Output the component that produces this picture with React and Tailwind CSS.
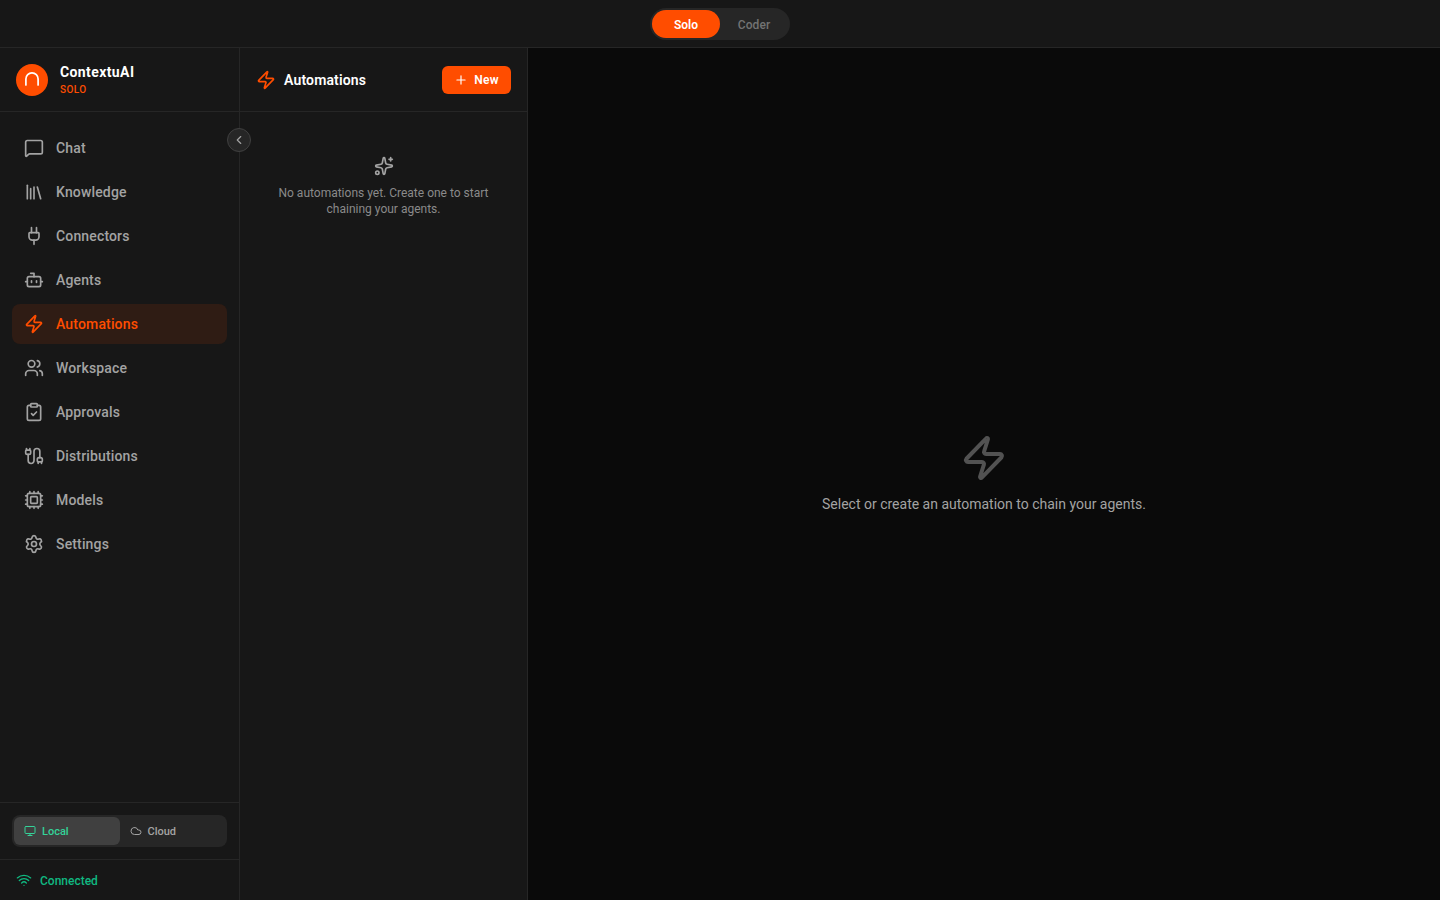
import React from "react";
import { MessageSquare, Library, Plug, Bot, Zap, Users, ClipboardCheck, Cable, Cpu, Settings, Monitor, Cloud, Wifi, Plus, Sparkles, ChevronLeft } from "lucide-react";

const NAV = [
  ["Chat", MessageSquare],
  ["Knowledge", Library],
  ["Connectors", Plug],
  ["Agents", Bot],
  ["Automations", Zap],
  ["Workspace", Users],
  ["Approvals", ClipboardCheck],
  ["Distributions", Cable],
  ["Models", Cpu],
  ["Settings", Settings],
];

export default function App() {
  return (
    <div className="h-screen w-full flex flex-col bg-[#0a0a0a] overflow-hidden font-['Roboto',sans-serif]">
      <header className="h-12 shrink-0 flex items-center justify-center bg-[#171717] border-b border-[#262626]">
        <div className="flex items-center h-8 p-0.5 rounded-full bg-[#262626]">
          <div className="w-[68px] h-7 pt-0.5 flex items-center justify-center rounded-full bg-[#ff4d00] text-white text-xs font-semibold">Solo</div>
          <div className="w-[68px] h-7 pt-0.5 flex items-center justify-center rounded-full text-[#737373] text-xs font-medium tracking-[0.1px]">Coder</div>
        </div>
      </header>
      <div className="flex-1 flex min-h-0">
        <aside className="relative w-60 shrink-0 flex flex-col bg-[#171717] border-r border-[#262626]">
          <div className="h-16 shrink-0 flex items-center gap-3 px-4 border-b border-[#262626]">
            <div className="w-8 h-8 rounded-full bg-[#ff4d00] flex items-center justify-center">
              <svg width="16" height="16" viewBox="0 0 16 16" fill="none" stroke="white" strokeWidth="1.7" strokeLinecap="round">
                <path d="M1.9 13V7a6.1 6.1 0 0 1 12.2 0V13" />
              </svg>
            </div>
            <div className="flex flex-col">
              <span className="text-sm leading-[18px] font-bold text-white tracking-[0.4px]">ContextuAI</span>
              <span className="mt-0.5 text-[10px] leading-[14px] font-medium tracking-[0.4px] text-[#ff4d00]">SOLO</span>
            </div>
          </div>
          <button className="absolute left-[227px] top-[80px] w-6 h-6 rounded-full bg-[#262626] border border-[#404040] flex items-center justify-center text-[#a3a3a3]">
            <ChevronLeft size={14} strokeWidth={2} />
          </button>
          <nav className="flex-1 flex flex-col gap-1 px-3 pt-4">
            {NAV.map(([label, Icon]) => {
              const active = label === "Automations";
              return (
                <div
                  key={label}
                  className={
                    active
                      ? "h-10 flex items-center gap-3 px-3 rounded-lg bg-[#2f1c14] text-[#ff4d00] text-sm font-medium tracking-[0.15px]"
                      : "h-10 flex items-center gap-3 px-3 rounded-lg text-[#a3a3a3] text-sm font-medium tracking-[0.15px]"
                  }
                >
                  <Icon size={20} strokeWidth={2} />
                  <span>{label}</span>
                </div>
              );
            })}
          </nav>
          <div className="shrink-0 h-[57px] flex items-center px-3 border-t border-[#262626]">
            <div className="w-full h-8 flex items-center p-0.5 rounded-lg bg-[#262626]">
              <div className="flex-1 h-7 flex items-center gap-1.5 px-2.5 rounded-md bg-[#404040] text-[#34d399] text-[11px] font-medium">
                <Monitor size={12} />
                <span className="pt-0.5">Local</span>
              </div>
              <div className="flex-1 h-7 flex items-center gap-1.5 px-2.5 rounded-md text-[#a3a3a3] text-[11px] font-medium">
                <Cloud size={12} />
                <span className="pt-0.5">Cloud</span>
              </div>
            </div>
          </div>
          <div className="shrink-0 h-[41px] flex items-center gap-2 px-4 border-t border-[#262626] text-[#10b981] text-xs font-medium">
            <Wifi size={16} />
            <span className="pt-0.5">Connected</span>
          </div>
        </aside>
        <section className="w-72 shrink-0 flex flex-col bg-[#171717] border-r border-[#262626]">
          <div className="h-16 shrink-0 flex items-center justify-between px-4 border-b border-[#262626]">
            <div className="flex items-center gap-2">
              <Zap size={20} strokeWidth={2} className="text-[#ff4d00]" />
              <span className="text-sm font-semibold text-white tracking-[0.15px]">Automations</span>
            </div>
            <button className="h-7 flex items-center gap-1.5 px-3 rounded-md bg-[#ff4d00] text-white text-xs font-semibold tracking-[0.3px]">
              <Plus size={14} strokeWidth={2} />
              <span>New</span>
            </button>
          </div>
          <div className="flex flex-col items-center px-8 pt-11 text-center">
            <Sparkles size={20} strokeWidth={2} className="text-[#a3a3a3] mb-[9px]" />
            <p className="text-xs leading-4 text-[#8a8a8a]">No automations yet. Create one to start chaining your agents.</p>
          </div>
        </section>
        <main className="flex-1 flex flex-col items-center justify-center bg-[#0a0a0a]">
          <Zap size={48} strokeWidth={2} className="text-[#525252] mb-3" />
          <p className="text-sm text-[#a3a3a3]">Select or create an automation to chain your agents.</p>
        </main>
      </div>
    </div>
  );
}
